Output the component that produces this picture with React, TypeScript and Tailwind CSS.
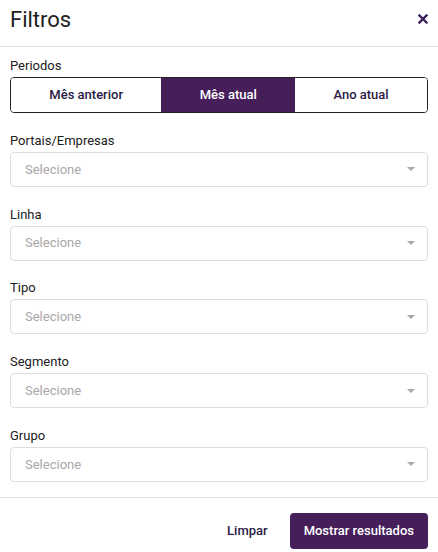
const periods = ["Mês anterior", "Mês atual", "Ano atual"];
const fields = ["Portais/Empresas", "Linha", "Tipo", "Segmento", "Grupo"];

function Select({ label }: { label: string }) {
  return (
    <div className="mt-[18.75px]">
      <p className="text-[13px] leading-[18px] text-[#212121]">{label}</p>
      <div className="mt-[2px] flex h-[35px] items-center justify-between rounded-[4px] border border-[#dedede] bg-white pl-[14px] pr-[12px]">
        <span className="text-[13px] text-[#a8a8a8]">Selecione</span>
        <span className="h-0 w-0 border-x-[4px] border-t-[4px] border-x-transparent border-t-[#a8a8a8]" />
      </div>
    </div>
  );
}

export default function App() {
  return (
    <div className="h-[552px] w-[438px] bg-white font-['Roboto',sans-serif]">
      <header className="flex h-[47px] items-center justify-between border-b border-[#e3e3e3] pl-[10px] pr-[10px]">
        <h1 className="text-[22px] font-normal leading-none text-[#222] -mt-[6px]">Filtros</h1>
        <svg width="10" height="10" viewBox="0 0 10 10" className="-mt-[8px]" aria-hidden>
          <path d="M1.5 1.5 L8.5 8.5 M8.5 1.5 L1.5 8.5" stroke="#3f1f5a" strokeWidth="2.4" strokeLinecap="square" />
        </svg>
      </header>

      <div className="px-[10px] pt-[10px] pb-[15px]">
        <p className="text-[13px] leading-[18px] text-[#212121]">Periodos</p>
        <div className="mt-[2px] flex h-[36px] overflow-hidden rounded-[4px] border border-[#222]">
          {periods.map((p) => (
            <button
              key={p}
              className={
                p === "Mês atual"
                  ? "flex-auto bg-[#451e5a] text-[13px] font-medium text-white"
                  : "flex-auto bg-white text-[13px] font-medium text-[#2b1a45]"
              }
            >
              {p}
            </button>
          ))}
        </div>

        {fields.map((f) => (
          <Select key={f} label={f} />
        ))}
      </div>

      <footer className="flex items-center justify-end gap-[22px] border-t border-[#e3e3e3] px-[10px] pt-[15px]">
        <button className="text-[13px] font-medium text-[#2b1a45]">Limpar</button>
        <button className="h-[36px] rounded-[4px] bg-[#451e5a] px-[14px] text-[13px] font-medium text-white">
          Mostrar resultados
        </button>
      </footer>
    </div>
  );
}
